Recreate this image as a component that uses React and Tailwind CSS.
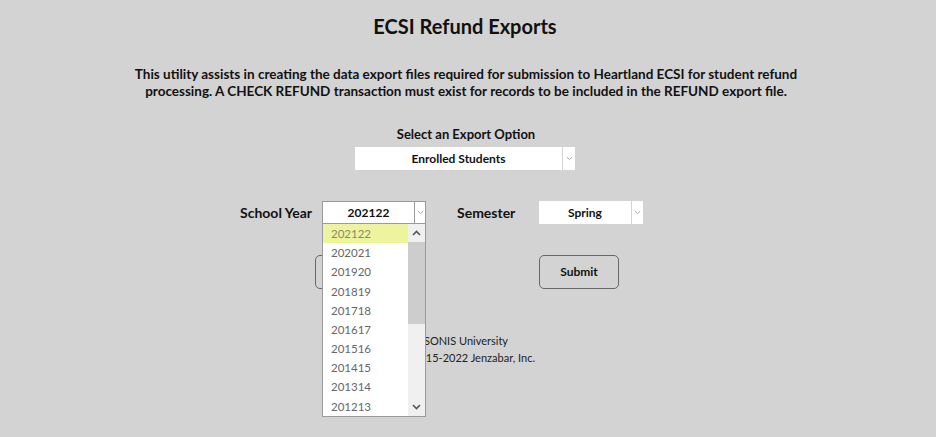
import React from "react";

const Chevron = ({ className = "" }) => (
  <svg width="7" height="5" viewBox="0 0 7 5" className={className}>
    <path d="M0.8 1 L3.5 3.6 L6.2 1" fill="none" stroke="#a8a8a8" strokeWidth="1" />
  </svg>
);

const years = ["202122","202021","201920","201819","201718","201617","201516","201415","201314","201213"];

export default function App() {
  return (
    <div className="min-h-screen w-full bg-[#d3d3d3] text-[#111] font-['Lato',sans-serif] overflow-hidden">
      <div className="pt-[14px] text-center text-[20px] leading-[24px] font-bold pr-[6px]">ECSI Refund Exports</div>
      <div className="mt-[28px] text-center text-[13.5px] leading-[17px] font-bold pr-[4px]">
        <div>This utility assists in creating the data export files required for submission to Heartland ECSI for student refund</div>
        <div>processing. A CHECK REFUND transaction must exist for records to be included in the REFUND export file.</div>
      </div>
      <div className="mt-[26px] text-center text-[13px] leading-[17px] font-bold pr-[4px]">Select an Export Option</div>
      <div className="mt-[4px] flex pl-[355px]">
        <div className="flex h-[23px] gap-[1px]">
          <div className="w-[207px] bg-white flex items-center justify-center text-[12px] font-bold">Enrolled Students</div>
          <div className="w-[12px] bg-white flex items-center justify-center"><Chevron /></div>
        </div>
      </div>
      <div className="mt-[31px] flex items-center pl-[240px] h-[23px]">
        <div className="w-[82px] text-[14px] leading-[17px] font-bold">School Year</div>
        <div className="relative">
          <div className="flex h-[23px] w-[104px] border border-[#9a9a9a] bg-white">
            <div className="flex-1 flex items-center justify-center text-[12px] font-bold border-r border-[#9a9a9a]">202122</div>
            <div className="w-[10px] flex items-center justify-center"><Chevron /></div>
          </div>
          <div className="absolute left-0 top-[22px] z-10 w-[104px] h-[194px] border border-[#9a9a9a] bg-white flex">
            <div className="flex-1 flex flex-col">
              {years.map((y, i) => (
                <div key={y} className={`h-[19.2px] flex items-center pl-[8px] text-[11.5px] ${i === 0 ? "bg-[#eef39d] text-[#8a8a6a]" : "text-[#666]"}`}>{y}</div>
              ))}
            </div>
            <div className="w-[17px] bg-[#f0f0f0] flex flex-col">
              <div className="h-[18px] flex items-center justify-center">
                <svg width="9" height="6" viewBox="0 0 9 6"><path d="M1 5 L4.5 1.5 L8 5" fill="none" stroke="#555" strokeWidth="1.6" /></svg>
              </div>
              <div className="h-[82px] bg-[#cdcdcd]" />
              <div className="flex-1" />
              <div className="h-[18px] flex items-center justify-center">
                <svg width="9" height="6" viewBox="0 0 9 6"><path d="M1 1 L4.5 4.5 L8 1" fill="none" stroke="#555" strokeWidth="1.6" /></svg>
              </div>
            </div>
          </div>
        </div>
        <div className="ml-[31px] w-[82px] text-[14px] leading-[17px] font-bold">Semester</div>
        <div className="flex h-[23px] gap-[1px]">
          <div className="w-[92px] bg-white flex items-center justify-center text-[12px] font-bold">Spring</div>
          <div className="w-[11px] bg-white flex items-center justify-center"><Chevron /></div>
        </div>
      </div>
      <div className="mt-[31px] flex justify-center gap-[144px] pr-[2px]">
        <button className="w-[80px] h-[34px] rounded-[5px] border border-[#666] text-[12px] font-bold">Export</button>
        <button className="w-[80px] h-[34px] rounded-[5px] border border-[#666] text-[12px] font-bold">Submit</button>
      </div>
      <div className="mt-[43px] text-[11px] leading-[17px] text-[#222]">
        <div className="w-[508px] text-right">Powered by SONIS University</div>
        <div className="w-[535px] text-right">Copyright ©2015-2022 Jenzabar, Inc.</div>
      </div>
    </div>
  );
}
